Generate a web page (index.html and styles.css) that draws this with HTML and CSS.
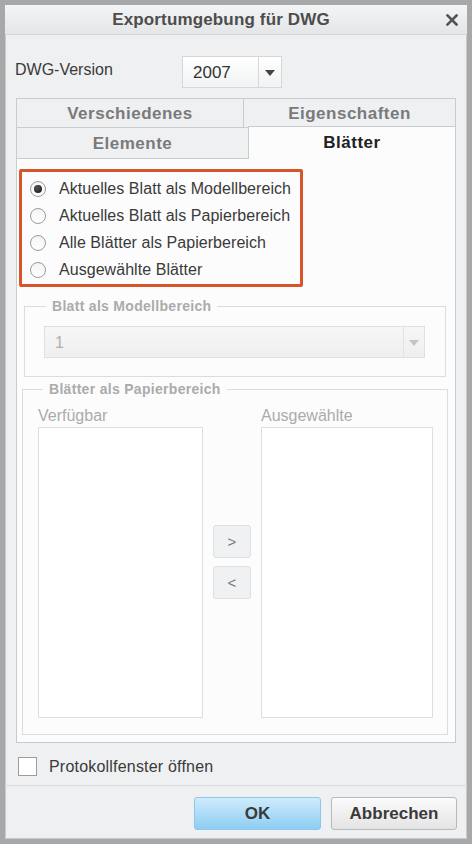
FILE: index.html
```html
<!DOCTYPE html>
<html lang="de">
<head>
<meta charset="utf-8">
<title>Exportumgebung für DWG</title>
<link rel="stylesheet" href="styles.css">
</head>
<body>
<div class="window">
  <div class="titlebar">
    <span></span>
    <span class="title">Exportumgebung für DWG</span>
    <span></span>
    <span class="close">
      <svg width="12" height="12" viewBox="0 0 12 12"><path d="M1.5 1.5 L10.5 10.5 M10.5 1.5 L1.5 10.5" stroke="#555" stroke-width="2.6" stroke-linecap="square"/></svg>
    </span>
  </div>
  <div class="body">
    <div class="version-row">
      <span class="version-label">DWG-Version</span>
      <div class="combo">
        <span class="combo-value">2007</span>
        <span class="combo-btn"><svg width="10" height="6" viewBox="0 0 10 6"><path d="M0 0 H10 L5 6 Z" fill="#444"/></svg></span>
      </div>
    </div>

    <div class="tabs">
      <div class="tab-row row1">
        <div class="tab t-versch">Verschiedenes</div>
        <div class="tab t-eigen">Eigenschaften</div>
      </div>
      <div class="tab-row row2">
        <div class="tab t-elem">Elemente</div>
        <div class="tab t-blatt active">Blätter</div>
      </div>
      <div class="panel">
        <div class="radio-box">
          <label class="radio-row"><span class="radio checked"></span>Aktuelles Blatt als Modellbereich</label>
          <label class="radio-row"><span class="radio"></span>Aktuelles Blatt als Papierbereich</label>
          <label class="radio-row"><span class="radio"></span>Alle Blätter als Papierbereich</label>
          <label class="radio-row"><span class="radio"></span>Ausgewählte Blätter</label>
        </div>

        <fieldset class="group g1">
          <legend>Blatt als Modellbereich</legend>
          <div class="combo disabled wide">
            <span class="combo-value">1</span>
            <span class="combo-btn"><svg width="10" height="6" viewBox="0 0 10 6"><path d="M0 0 H10 L5 6 Z" fill="#c4c4c4"/></svg></span>
          </div>
        </fieldset>

        <fieldset class="group g2">
          <legend>Blätter als Papierbereich</legend>
          <div class="lists">
            <div class="list-col">
              <span class="list-label">Verfügbar</span>
              <div class="listbox left"></div>
            </div>
            <div class="move-btns">
              <button class="move">&gt;</button>
              <button class="move">&lt;</button>
            </div>
            <div class="list-col">
              <span class="list-label">Ausgewählte</span>
              <div class="listbox right"></div>
            </div>
          </div>
        </fieldset>
      </div>
    </div>

    <label class="check-row"><span class="checkbox"></span>Protokollfenster öffnen</label>
  </div>
  <div class="footer">
    <button class="btn ok">OK</button>
    <button class="btn cancel">Abbrechen</button>
  </div>
</div>
</body>
</html>
```
FILE: styles.css
```css
html, body {
  margin: 0;
  padding: 0;
  background: #ffffff;
}
body {
  font-family: "Liberation Sans", Arial, sans-serif;
  color: #333;
}
.window {
  width: 472px;
  height: 844px;
  box-sizing: border-box;
  border: 5px solid #a6a8aa;
  box-shadow: inset 0 0 0 1px #c8cacc;
  background: #eef0f2;
  display: flex;
  flex-direction: column;
}
.titlebar {
  height: 29px;
  border-bottom: 1px solid #d4d7da;
  background: linear-gradient(#f3f4f5, #e4e6e8);
  display: grid;
  grid-template-columns: 1fr auto 1fr 30px;
  align-items: center;
}
.title {
  font-size: 17px;
  font-weight: bold;
  color: #4d4d4d;
  letter-spacing: 0.15px;
}
.close {
  justify-self: end;
  margin-right: 9px;
  display: flex;
  margin-top: 1px;
}
.body {
  flex: 1;
  display: flex;
  flex-direction: column;
  padding: 21px 11px 0 11px;
}
.version-row {
  display: flex;
  align-items: center;
  height: 32px;
}
.version-label {
  font-size: 16px;
  color: #3a3a3a;
  width: 167px;
  margin-left: -1px;
  margin-top: -4px;
}
.combo {
  display: flex;
  width: 100px;
  height: 32px;
  box-sizing: border-box;
  border: 1px solid #d5d7d9;
  background: linear-gradient(#ffffff, #f1f2f3);
}
.combo-value {
  flex: 1;
  font-size: 17px;
  color: #333;
  padding-left: 10px;
  display: flex;
  align-items: center;
  padding-top: 2px;
}
.combo-btn {
  width: 22px;
  border-left: 1px solid #d5d7d9;
  display: flex;
  align-items: center;
  justify-content: center;
  padding-top: 2px;
}
.tabs {
  margin-top: 10px;
  display: flex;
  flex-direction: column;
}
.tab-row {
  display: flex;
}
.tab {
  box-sizing: border-box;
  font-size: 17px;
  letter-spacing: 0.5px;
  font-weight: bold;
  color: #7a7a7a;
  display: flex;
  align-items: center;
  justify-content: center;
  background: #eef0f2;
  border: 1px solid #c9ccce;
}
.row1 .tab {
  height: 30px;
  padding-top: 2px;
}
.t-versch { width: 227px; border-right: none; }
.t-eigen { width: 213px; }
.row2 {
  margin-top: -1px;
  height: 32px;
  align-items: flex-end;
}
.t-elem {
  width: 232px;
  height: 32px;
  border-right: none;
  padding-top: 1px;
}
.t-blatt {
  width: 208px;
  height: 33px;
  margin-top: -1px;
  background: #fcfcfc;
  color: #222;
  border-bottom: none;
  padding-top: 0px;
  position: relative;
  z-index: 1;
}
.panel {
  margin-top: -1px;
  height: 585px;
  box-sizing: border-box;
  background: #fcfcfc;
  border: 1px solid #c9ccce;
  padding: 10px 5px 0 2px;
  display: flex;
  flex-direction: column;
}
.radio-box {
  width: 284px;
  box-sizing: border-box;
  border: 3px solid #d8552c;
  border-radius: 2px;
  padding: 3px 0 1px 8px;
  display: flex;
  flex-direction: column;
}
.radio-row {
  height: 27px;
  display: flex;
  align-items: center;
  font-size: 16px;
  letter-spacing: 0.05px;
  color: #3a3a3a;
  gap: 13px;
  white-space: nowrap;
}
.radio {
  width: 16px;
  height: 16px;
  flex: none;
  box-sizing: border-box;
  border-radius: 50%;
  border: 1px solid #9a9a9a;
  background: linear-gradient(#f4f4f4, #ffffff);
  display: flex;
  align-items: center;
  justify-content: center;
}
.radio.checked::after {
  content: "";
  width: 8px;
  height: 8px;
  border-radius: 50%;
  background: radial-gradient(circle at 40% 35%, #555, #111);
}
.group {
  margin: 0;
  border: 1px solid #dcdcdc;
  padding: 0;
  min-width: 0;
}
.group legend {
  font-size: 14px;
  letter-spacing: 0.3px;
  font-weight: bold;
  color: #ababab;
  line-height: 16px;
  padding: 0 6px;
}
.g1 {
  margin: 11px 4px 0 5px;
  padding: 12px 20px 18px 19px;
}
.g1 legend { margin-left: 2px; }
.combo.wide {
  width: 100%;
}
.combo.disabled {
  height: 32px;
  background: linear-gradient(#f6f6f6, #efefef);
  border-color: #e0e0e0;
}
.combo.disabled .combo-value {
  color: #b0b0b0;
  font-size: 16px;
  padding-left: 10px;
}
.combo.disabled .combo-btn {
  border-left-color: #e2e2e2;
  width: 20px;
}
.g2 {
  margin: 4px 2px 0 3px;
  padding: 10px 15px 16px 15px;
  flex: 0 0 auto;
}
.g2 legend { margin-left: 5px; }
.lists {
  display: grid;
  grid-template-columns: 165px 58px 172px;
}
.list-col {
  display: flex;
  flex-direction: column;
}
.list-label {
  font-size: 16px;
  color: #ababab;
  height: 18px;
  line-height: 18px;
  white-space: nowrap;
}
.listbox {
  margin-top: 2px;
  height: 291px;
  box-sizing: border-box;
  background: #ffffff;
  border: 1px solid #dedede;
}
.move-btns {
  display: flex;
  flex-direction: column;
  align-items: center;
  gap: 8px;
  padding-top: 118px;
}
.move {
  width: 38px;
  height: 33px;
  box-sizing: border-box;
  border: 1px solid #dedfe0;
  border-radius: 3px;
  background: #f0f1f2;
  font-family: "Liberation Sans", Arial, sans-serif;
  font-size: 15px;
  color: #777;
  padding: 0;
}
.check-row {
  margin-top: 14px;
  margin-left: 2px;
  display: flex;
  align-items: center;
  gap: 12px;
  font-size: 16px;
  letter-spacing: 0.2px;
  color: #3a3a3a;
  height: 19px;
}
.checkbox {
  width: 19px;
  height: 19px;
  box-sizing: border-box;
  border: 1px solid #9c9c9c;
  background: #fff;
}
.footer {
  border-top: 1px solid #d8dadc;
  margin-top: 6px;
  height: 54px;
  box-sizing: border-box;
  display: flex;
  justify-content: flex-end;
  gap: 10px;
  padding: 11px 10px 0 0;
}
.btn {
  height: 33px;
  box-sizing: border-box;
  border-radius: 3px;
  font-family: "Liberation Sans", Arial, sans-serif;
  font-size: 17px;
  font-weight: bold;
  color: #3a3a3a;
  padding: 0;
}
.ok {
  width: 127px;
  border: 1px solid #8fc7ea;
  background: linear-gradient(#cfebfc, #8dcdf3);
}
.cancel {
  width: 126px;
  border: 1px solid #b9b9b9;
  background: linear-gradient(#fbfbfb, #e4e4e4);
}
```
